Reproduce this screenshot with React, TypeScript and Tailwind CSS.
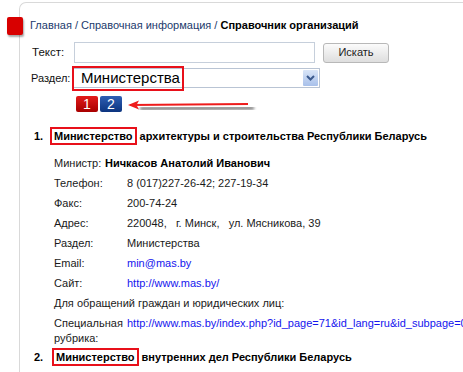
import React from 'react';

const details: { label: string; value: React.ReactNode }[] = [
  { label: 'Телефон:', value: '8 (017)227-26-42; 227-19-34' },
  { label: 'Факс:', value: '200-74-24' },
  { label: 'Адрес:', value: '220048,\u00a0\u00a0 г. Минск,\u00a0\u00a0 ул. Мясникова, 39' },
  { label: 'Раздел:', value: 'Министерства' },
  { label: 'Email:', value: <a className="text-[#1515ee]">min@mas.by</a> },
  { label: 'Сайт:', value: <a className="text-[#1515ee]">http://www.mas.by/</a> },
];

function Highlight({ children }: { children: React.ReactNode }) {
  return (
    <span className="inline-block border-2 border-[#e8101a] pl-[2px] pr-[2px] leading-[14px]">{children}</span>
  );
}

export default function App() {
  return (
    <div className="relative h-[372px] w-[463px] overflow-hidden bg-white font-['Liberation_Sans',Arial,sans-serif] text-[11px] text-[#111]">
      {/* red corner marker */}
      <div className="absolute left-[7px] top-[17px] h-[18px] w-[16px] rounded-[2px] bg-[#d80000] shadow-[1px_2px_2px_rgba(0,0,0,0.35)]" />

      <div className="ml-[19px] mt-[2px] h-[400px] w-[520px] rounded-tl-[7px] border-l border-t border-[#d9d9d9]">
        {/* breadcrumb */}
        <div className="ml-[10px] mt-[14px] text-[11px] leading-[16px] text-[#1b3a6c]">
          Главная / Справочная информация / <b className="text-black">Справочник организаций</b>
        </div>

        {/* search form */}
        <div className="ml-[12px] mt-[9px] flex items-center">
          <span className="w-[42px] text-[11.5px]">Текст:</span>
          <div className="h-[21px] w-[241px] border border-[#c6cfdb] bg-white" />
          <button className="ml-[8px] h-[20px] w-[66px] rounded-[3px] border border-[#b8b8b8] bg-gradient-to-b from-[#fbfbfb] to-[#dedede] text-[11px] text-[#222]">
            Искать
          </button>
        </div>
        <div className="ml-[11px] mt-[5px] flex items-center">
          <span className="w-[42px] text-[11px]">Раздел:</span>
          <div className="relative flex h-[20px] w-[247px] items-center border border-[#b9c4d4] bg-white">
            <span className="ml-[7px] text-[15px] leading-[18px] text-black">Министерства</span>
            <span className="absolute -left-[2px] -top-[3px] h-[25px] w-[112px] border-2 border-[#e8101a]" />
            <span className="ml-auto mr-[1px] flex h-[16px] w-[15px] items-center justify-center rounded-[1px] bg-gradient-to-b from-[#d9e5f7] to-[#a8c0ea]">
              <svg width="9" height="6" viewBox="0 0 9 6">
                <path d="M1 1 L4.5 4.5 L8 1" fill="none" stroke="#3b5a8e" strokeWidth="2" />
              </svg>
            </span>
          </div>
        </div>

        {/* pagination */}
        <div className="relative ml-[56px] mt-[8px] flex gap-[2px]">
          <span className="flex h-[16px] w-[22px] items-center justify-center rounded-[2px] bg-gradient-to-b from-[#e31a1a] to-[#a80000] text-[14px] leading-none text-white">1</span>
          <span className="flex h-[16px] w-[22px] items-center justify-center rounded-[2px] bg-gradient-to-b from-[#2e5fb4] to-[#0c347f] text-[14px] leading-none text-white">2</span>
          <svg className="absolute left-[50px] top-[1px]" width="134" height="18" viewBox="0 0 134 18">
            <defs>
              <filter id="blur" x="-10%" y="-200%" width="120%" height="500%">
                <feGaussianBlur stdDeviation="1.6" />
              </filter>
            </defs>
            <path d="M14 11.5 L128 11" stroke="#7a7a7a" strokeWidth="3.5" filter="url(#blur)" />
            <path d="M4 8 L122 7" stroke="#ee1c1c" strokeWidth="2" />
            <path d="M2 8 L13 3.5 L10.5 8 L13 12.5 Z" fill="#ee1c1c" />
          </svg>
        </div>

        {/* item 1 */}
        <div className="ml-[14px] mt-[15px] flex items-center text-[11px] font-bold text-black">
          <span className="w-[16px]">1.</span>
          <Highlight>Министерство</Highlight>
          <span>&nbsp;архитектуры и строительства Республики Беларусь</span>
        </div>

        <div className="ml-[34px] mt-[8px] text-[#1a1a1a]">
          <div className="flex py-[2.5px] leading-[15px]">
            <span className="w-[51px] shrink-0">Министр:</span>
            <b className="text-[11px] text-black">Ничкасов Анатолий Иванович</b>
          </div>
          {details.map((d) => (
            <div key={d.label} className="flex py-[2.5px] leading-[15px]">
              <span className="w-[73px] shrink-0">{d.label}</span>
              <span>{d.value}</span>
            </div>
          ))}
          <div className="py-[2.5px] leading-[15px]">Для обращений граждан и юридических лиц:</div>
          <div className="flex py-[2.5px] leading-[15px]">
            <span className="w-[73px] shrink-0 pr-[6px]">Специальная рубрика:</span>
            <a className="whitespace-nowrap text-[#1515ee]">http://www.mas.by/index.php?id_page=71&amp;id_lang=ru&amp;id_subpage=0</a>
          </div>
        </div>

        {/* item 2 */}
        <div className="ml-[14px] flex items-center text-[11px] font-bold text-black">
          <span className="w-[18px]">2.</span>
          <Highlight>Министерство</Highlight>
          <span>&nbsp;внутренних дел Республики Беларусь</span>
        </div>
      </div>
    </div>
  );
}
